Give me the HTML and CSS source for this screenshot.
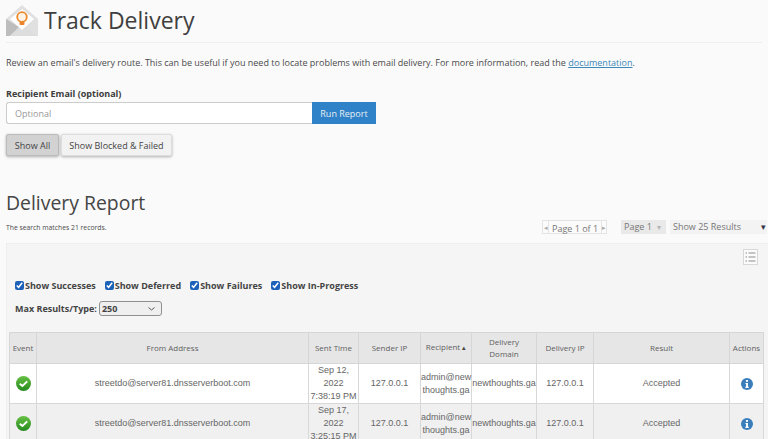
FILE: index.html
```html
<!DOCTYPE html>
<html lang="en">
<head>
<meta charset="utf-8">
<title>Track Delivery</title>
<link rel="stylesheet" href="styles.css">
</head>
<body>
<header class="page-head">
  <svg class="logo" width="32" height="32" viewBox="0 0 32 32" aria-hidden="true">
    <path d="M0 14 L16 0 L32 14 V31 H0 Z" fill="#e0e0e0"/>
    <path d="M0 14 V31 H4 L13 22 Z" fill="#bdbdbd"/>
    <path d="M4 31 L16 20 L32 31 Z" fill="#dddddd"/>
    <path d="M4 14 L16 4 L28 14 L16 25 Z" fill="#ffffff"/>
    <circle cx="16" cy="12" r="4.800" fill="#fff3e6" stroke="#ee8a2c" stroke-width="1.800"/>
    <rect x="13.500" y="17" width="5" height="3" rx="1" fill="#e9822a"/>
  </svg>
  <h1 class="title">Track Delivery</h1>
</header>
<main class="content">
  <p class="intro">Review an email's delivery route. This can be useful if you need to locate problems with email delivery. For more information, read the <a href="#">documentation</a>.</p>
  <label class="field-label" for="email">Recipient Email (optional)</label>
  <div class="input-row">
    <input id="email" class="email-input" type="text" placeholder="Optional">
    <button class="run-btn" type="button">Run Report</button>
  </div>
  <div class="filter-btns">
    <button class="filter-btn active" type="button">Show All</button>
    <button class="filter-btn" type="button">Show Blocked &amp; Failed</button>
  </div>
  <h2 class="report-title">Delivery Report</h2>
  <div class="report-bar">
    <span class="matches">The search matches 21 records.</span>
    <div class="pager">
      <div class="pager-box"><span class="arrow">◂</span><span class="pager-text">Page 1 of 1</span><span class="arrow">▸</span></div>
      <div class="page-select">Page 1 <span class="caret-light">▾</span></div>
      <div class="size-select"><span>Show 25 Results</span><span class="caret-dark">▾</span></div>
    </div>
  </div>
  <section class="panel">
    <div class="panel-tools">
      <svg class="cols-icon" width="15" height="16" viewBox="0 0 15 16" aria-hidden="true">
        <rect x="0.500" y="0.500" width="14" height="15" fill="#fbfbfb" stroke="#d8d8d8"/>
        <path d="M2.500 4H4M5.500 4H12.500M2.500 8H4M5.500 8H12.500M2.500 12H4M5.500 12H12.500" stroke="#8d8d8d" stroke-width="1.200"/>
      </svg>
    </div>
    <div class="checks">
      <label class="check"><input type="checkbox" checked>Show Successes</label>
      <label class="check"><input type="checkbox" checked>Show Deferred</label>
      <label class="check"><input type="checkbox" checked>Show Failures</label>
      <label class="check"><input type="checkbox" checked>Show In-Progress</label>
    </div>
    <div class="max-row">
      <label class="max-label" for="max">Max Results/Type:</label>
      <select id="max" class="max-select"><option>250</option></select>
    </div>
    <table class="report">
      <colgroup>
        <col class="c-event"><col class="c-from"><col class="c-sent"><col class="c-sender"><col class="c-rcpt"><col class="c-domain"><col class="c-dip"><col class="c-result"><col class="c-actions">
      </colgroup>
      <thead>
        <tr>
          <th>Event</th><th>From Address</th><th>Sent Time</th><th>Sender IP</th><th>Recipient <span class="sort">▴</span></th><th>Delivery<br>Domain</th><th>Delivery IP</th><th>Result</th><th>Actions</th>
        </tr>
      </thead>
      <tbody>
        <tr>
          <td><svg class="ok" width="15" height="15" viewBox="0 0 15 15" aria-hidden="true"><defs><linearGradient id="okfill" x1="0" y1="0" x2="0" y2="1"><stop offset="0" stop-color="#66c043"/><stop offset="1" stop-color="#268a1e"/></linearGradient></defs><circle cx="7.500" cy="7.500" r="7.500" fill="url(#okfill)"/><path d="M3.800 7.800 L6.400 10 L11.200 5.400" fill="none" stroke="#fff" stroke-width="2"/></svg></td>
          <td>streetdo@server81.dnsserverboot.com</td>
          <td>Sep 12, 2022 7:38:19 PM</td>
          <td>127.0.0.1</td>
          <td>admin@new<br>thoughts.ga</td>
          <td>newthoughts.ga</td>
          <td>127.0.0.1</td>
          <td>Accepted</td>
          <td><svg class="info" width="12" height="12" viewBox="0 0 13 13" aria-hidden="true"><circle cx="6.500" cy="6.500" r="6.500" fill="#3a7fbc"/><rect x="5.400" y="2.200" width="2.200" height="2" fill="#fff"/><path d="M4.800 5.300H7.600V9.600H8.400V10.800H4.700V9.600H5.500V6.500H4.800Z" fill="#fff"/></svg></td>
        </tr>
        <tr>
          <td><svg class="ok" width="15" height="15" viewBox="0 0 15 15" aria-hidden="true"><circle cx="7.500" cy="7.500" r="7.500" fill="url(#okfill)"/><path d="M3.800 7.800 L6.400 10 L11.200 5.400" fill="none" stroke="#fff" stroke-width="2"/></svg></td>
          <td>streetdo@server81.dnsserverboot.com</td>
          <td>Sep 17, 2022 3:25:15 PM</td>
          <td>127.0.0.1</td>
          <td>admin@new<br>thoughts.ga</td>
          <td>newthoughts.ga</td>
          <td>127.0.0.1</td>
          <td>Accepted</td>
          <td><svg class="info" width="12" height="12" viewBox="0 0 13 13" aria-hidden="true"><circle cx="6.500" cy="6.500" r="6.500" fill="#3a7fbc"/><rect x="5.400" y="2.200" width="2.200" height="2" fill="#fff"/><path d="M4.800 5.300H7.600V9.600H8.400V10.800H4.700V9.600H5.500V6.500H4.800Z" fill="#fff"/></svg></td>
        </tr>
      </tbody>
    </table>
  </section>
</main>
</body>
</html>
```

FILE: styles.css
```css
* { box-sizing: border-box; }
html, body { margin: 0; padding: 0; height: 439px; overflow: hidden; }
body { background: #fafafa; color: #444; font-family: "Open Sans", sans-serif; }

.page-head { display: flex; align-items: flex-start; height: 43px; margin: 0 6px; padding-top: 5px; border-bottom: 1px solid #eeeeee; }
.logo { flex: none; }
.title { margin: -1px 0 0 6px; font-size: 23px; font-weight: 400; line-height: 32px; color: #3f3f3f; }

.content { padding: 0 0 0 6px; }
.intro { margin: 13px 0 0; font-size: 9px; line-height: 13px; color: #4a4a4a; }
.intro a { color: #3c89b8; }

.field-label { display: block; margin-top: 18px; font-size: 9px; line-height: 13px; font-weight: 700; color: #3d3d3d; }
.input-row { display: flex; margin-top: 2px; height: 22px; }
.email-input { width: 306px; height: 22px; padding: 0 8px; border: 1px solid #cccccc; border-right: 0; border-radius: 3px 0 0 3px; background: #fff; font: 9px "Open Sans", sans-serif; color: #444; }
.email-input::placeholder { color: #9a9a9a; opacity: 1; }
.run-btn { width: 64px; height: 22px; padding: 0; border: 0; background: #2f82c8; color: #e8eef4; font: 400 9px "Open Sans", sans-serif; }

.filter-btns { display: flex; gap: 2px; margin-top: 10px; }
.filter-btn { height: 22px; padding: 0; border: 1px solid #dddddd; border-radius: 2px; background: #f2f2f2; box-shadow: 0 1px 3px rgba(0,0,0,.3); font: 9px "Open Sans", sans-serif; color: #444; white-space: nowrap; }
.filter-btn.active { width: 53px; background: #d2d2d2; border-color: #bbbbbb; }
.filter-btn:not(.active) { width: 111px; }

.report-title { margin: 33px 0 0; font-size: 19.400px; font-weight: 400; line-height: 27px; color: #454545; }

.report-bar { display: flex; justify-content: space-between; align-items: flex-start; height: 23px; margin-top: 4px; }
.matches { margin-top: 3px; font-size: 6.800px; line-height: 10px; color: #4a4a4a; }
.pager { display: flex; align-items: flex-start; gap: 4px; padding-right: 1px; color: #777; font-size: 9px; }
.pager-box { display: flex; align-items: center; width: 65px; height: 14px; margin-right: 10px; border: 1px solid #e4e4e4; background: #fbfbfb; justify-content: space-between; padding: 0 1px; }
.pager-text { line-height: 11px; border-left: 1px solid #e4e4e4; border-right: 1px solid #e4e4e4; padding: 2px 3px 0; white-space: nowrap; }
.arrow { font-size: 7px; color: #aaa; }
.page-select { width: 45px; height: 14px; padding-left: 3px; background: #e9e9e9; line-height: 14px; white-space: nowrap; }
.caret-light { color: #b5b5b5; font-size: 8px; margin-left: 3px; }
.size-select { display: flex; justify-content: space-between; width: 97px; height: 14px; padding: 0 1px 0 3px; background: #f3f3f3; line-height: 14px; }
.caret-dark { color: #334; font-size: 9px; }

.panel { height: 200px; padding: 5px 4px 0 3px; background: #f5f5f5; border-top: 1px solid #eeeeee; border-left: 1px solid #eeeeee; }
.panel-tools { display: flex; justify-content: flex-end; height: 16px; padding-right: 6px; }
.cols-icon { display: block; }

.checks { display: flex; margin: 13px 0 0 5px; height: 14px; align-items: center; }
.check { display: flex; align-items: center; margin-right: 9px; font-size: 9px; font-weight: 700; color: #444; white-space: nowrap; }
.check input { flex: none; width: 9px; height: 9px; margin: 0 1px 0 0; accent-color: #1c62b9; }

.max-row { display: flex; align-items: center; margin: 9px 0 0 5px; height: 15px; }
.max-label { font-size: 9px; font-weight: 700; color: #444; margin-right: 2px; }
.max-select { width: 63px; height: 15px; padding: 0 0 0 2px; border: 1px solid #8f8f8f; border-radius: 3px; background: #efefef url("data:image/svg+xml,%3Csvg xmlns='http://www.w3.org/2000/svg' width='7' height='4'%3E%3Cpath d='M.5.5 3.500 3 6.500.5' fill='none' stroke='%23555'/%3E%3C/svg%3E") no-repeat right 6px center; appearance: none; font: 700 9px "Open Sans", sans-serif; color: #444; }

.report { width: 754px; margin-top: 16px; margin-left: -1px; table-layout: fixed; border-collapse: collapse; font-family: "Liberation Sans", sans-serif; font-size: 9px; color: #666; }
.c-event { width: 27px; } .c-from { width: 272px; } .c-sent { width: 50px; } .c-sender { width: 62px; }
.c-rcpt { width: 51px; } .c-domain { width: 65px; } .c-dip { width: 57px; } .c-result { width: 136px; } .c-actions { width: 34px; }
.report th { height: 31px; padding: 0 1px; background: #e6e6e6; border: 1px solid #d6d6d6; font: 400 8px/12.500px "Open Sans", sans-serif; color: #5f5f5f; text-align: center; white-space: nowrap; }
.report td { height: 40px; padding: 0; border: 1px solid #d8d8d8; text-align: center; line-height: 13px; vertical-align: middle; }
.report tbody tr:nth-child(1) td { background: #ffffff; }
.report tbody tr:nth-child(2) td { background: #f0f0f0; }
.report td svg { display: block; margin: 0 auto; }
.sort { font-size: 7px; color: #444; }
```
